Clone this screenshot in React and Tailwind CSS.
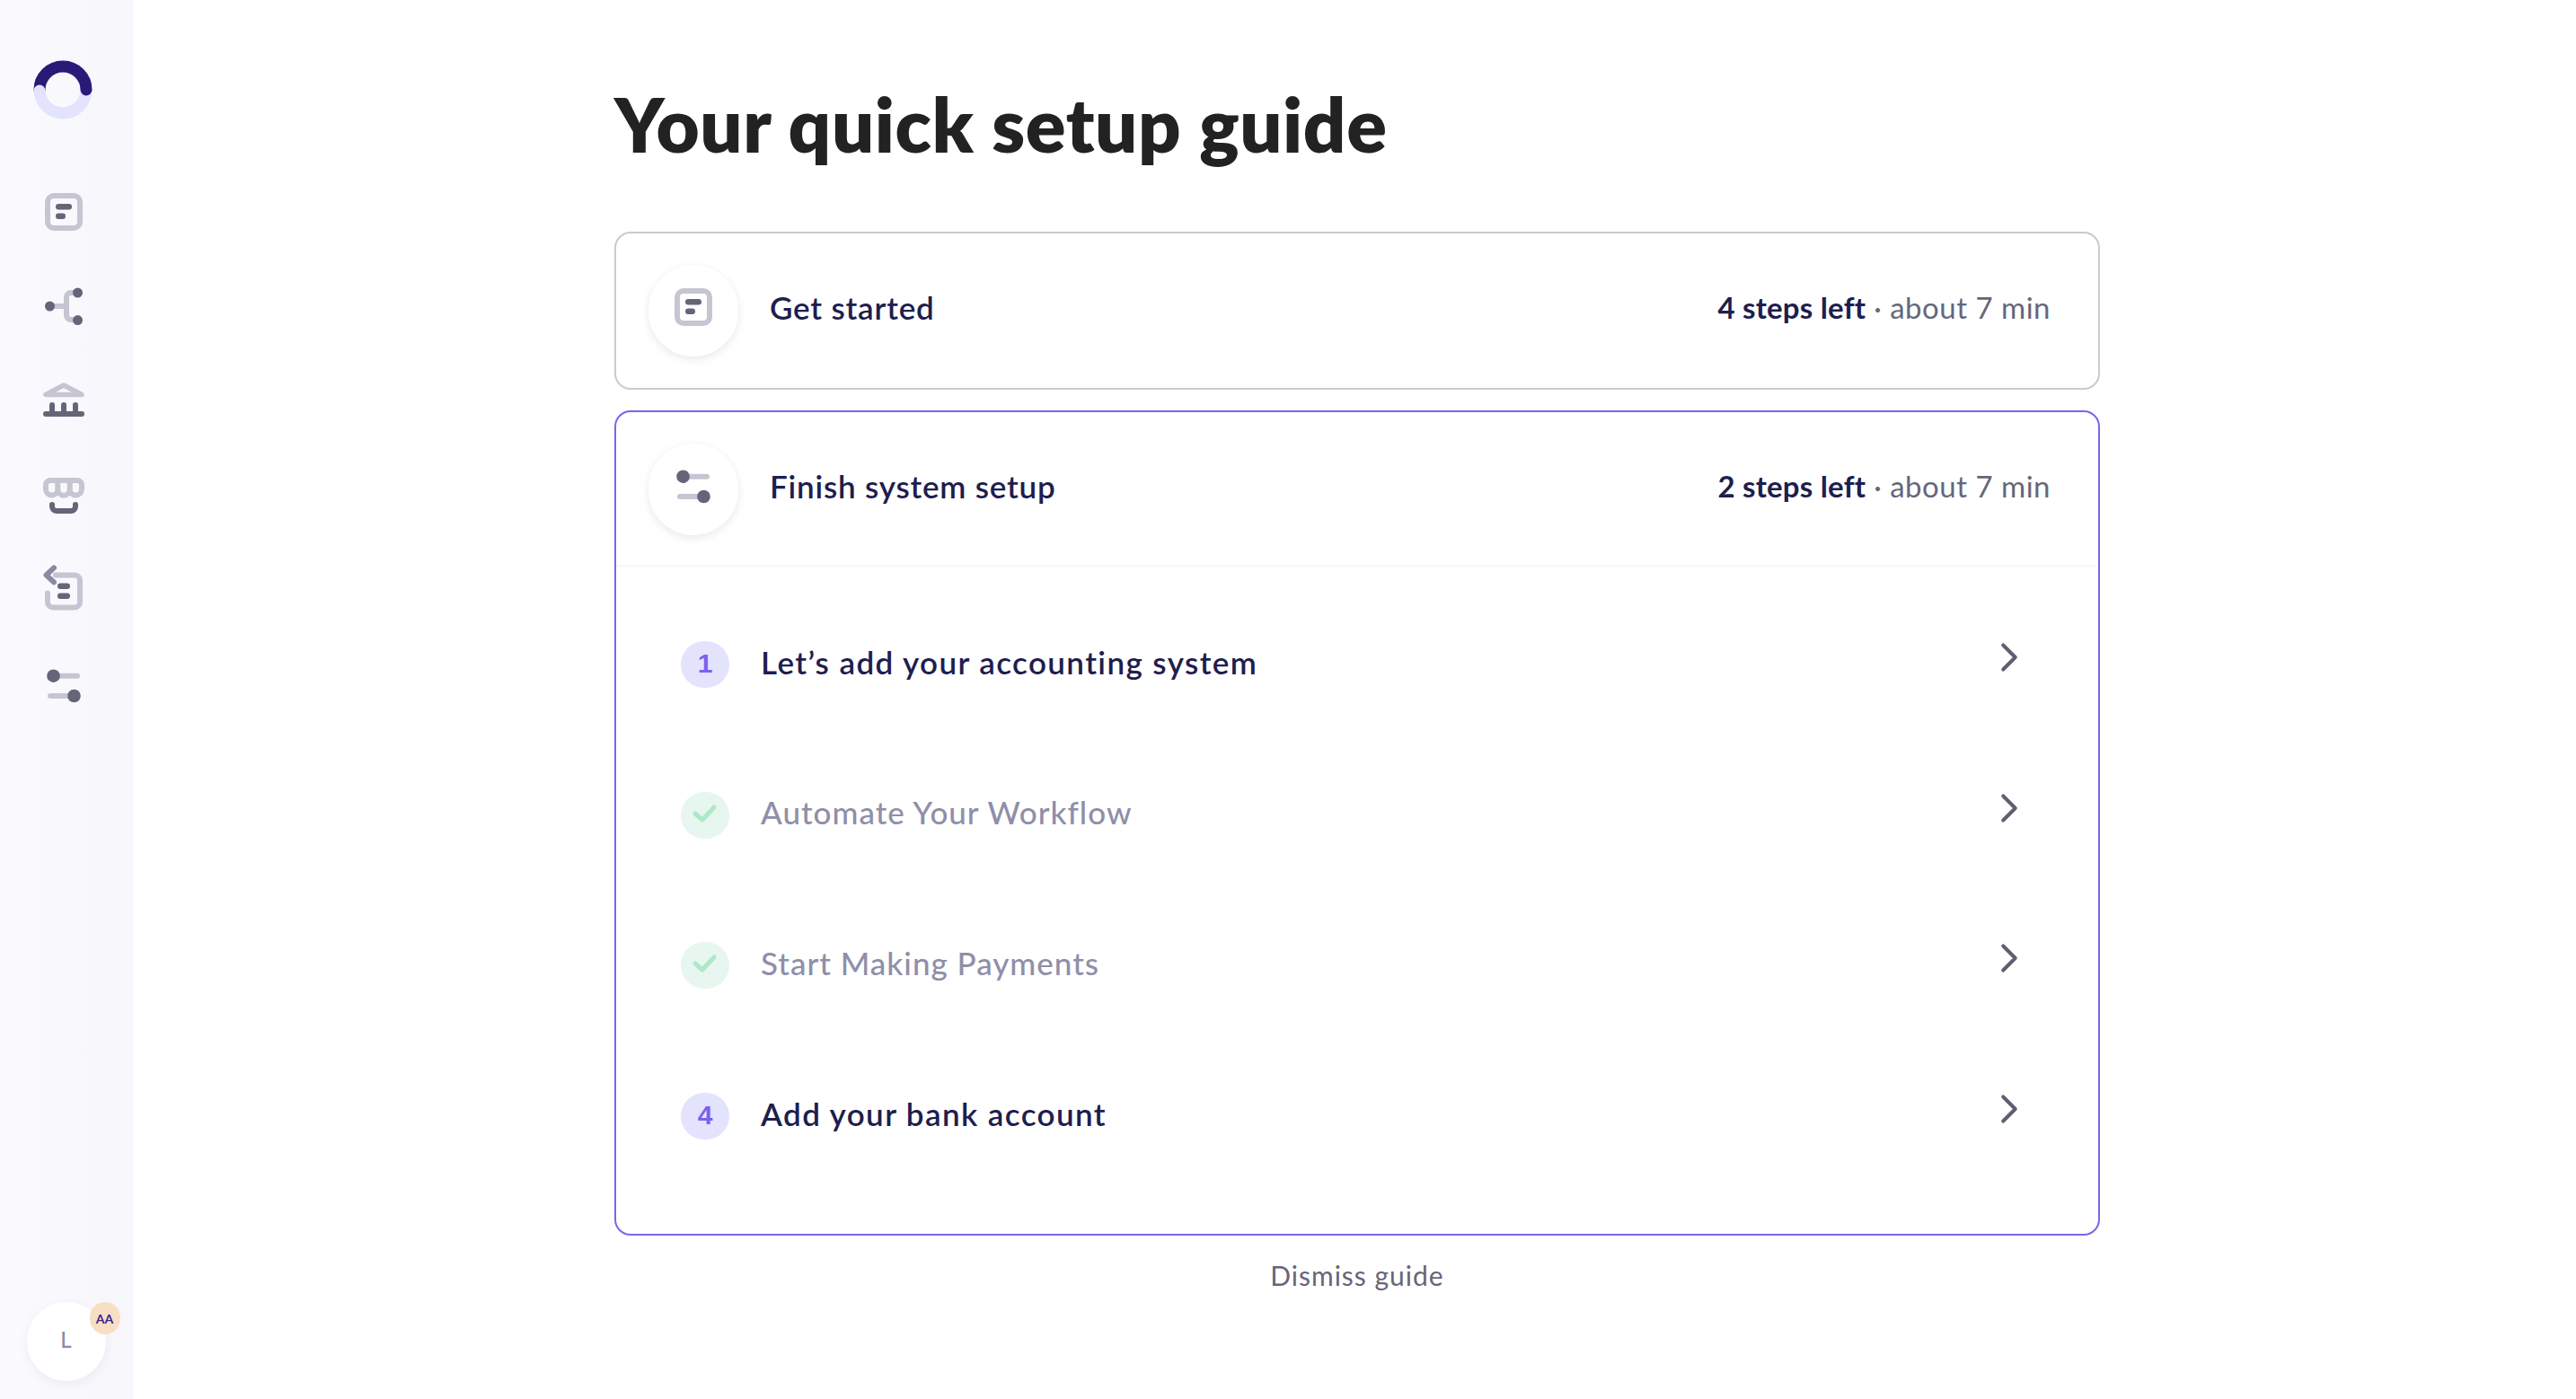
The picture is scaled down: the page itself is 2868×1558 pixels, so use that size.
import { ChevronRight } from "lucide-react";

const LIGHT = "#c6c6d2";
const DARK = "#65657a";

function LogoMark() {
  return (
    <svg width="66" height="66" viewBox="0 0 66 66" fill="none">
      <circle cx="33" cy="33" r="26" stroke="#e3e3fd" strokeWidth="13" />
      <path d="M7 33a26 26 0 0 1 52 0" stroke="#2a1a78" strokeWidth="13" strokeLinecap="round" />
      <circle cx="7" cy="34" r="6.5" fill="#e3e3fd" />
    </svg>
  );
}

function GuideIcon() {
  return (
    <svg width="60" height="60" viewBox="0 0 60 60" fill="none">
      <rect x="13" y="12" width="36" height="36" rx="7" stroke={LIGHT} strokeWidth="6" />
      <rect x="22" y="21" width="18" height="6.5" rx="3.25" fill={DARK} />
      <rect x="22" y="31.5" width="11" height="6.5" rx="3.25" fill={DARK} />
    </svg>
  );
}

function FlowIcon() {
  return (
    <svg width="60" height="60" viewBox="0 0 60 60" fill="none">
      <path d="M16 30h18M46 15h-7a5 5 0 0 0-5 5v20a5 5 0 0 0 5 5h7" stroke={LIGHT} strokeWidth="6" />
      <circle cx="15.5" cy="30" r="5.5" fill={DARK} />
      <circle cx="46.5" cy="15" r="5.5" fill={DARK} />
      <circle cx="46.5" cy="45.6" r="5.5" fill={DARK} />
    </svg>
  );
}

function BankIcon() {
  return (
    <svg width="60" height="60" viewBox="0 0 60 60" fill="none">
      <path d="M31 13 11 23.5h40z" stroke={LIGHT} strokeWidth="5.5" strokeLinejoin="round" />
      <path d="M18 35v9M31 35v9M44 35v9" stroke={DARK} strokeWidth="6" strokeLinecap="round" />
      <rect x="8" y="42" width="46" height="6" rx="3" fill={DARK} />
    </svg>
  );
}

function StoreIcon() {
  return (
    <svg width="60" height="60" viewBox="0 0 60 60" fill="none">
      <path
        d="M16 13h30a5 5 0 0 1 5 5v5a6.67 6.67 0 0 1-13.33 0 6.67 6.67 0 0 1-13.34 0 6.67 6.67 0 0 1-13.33 0v-5a5 5 0 0 1 5-5z"
        stroke={LIGHT}
        strokeWidth="6"
        strokeLinejoin="round"
      />
      <path d="M24.3 13v10M37.7 13v10" stroke={LIGHT} strokeWidth="6" />
      <path d="M18 40v2a5 5 0 0 0 5 5h16a5 5 0 0 0 5-5v-2" stroke={DARK} strokeWidth="6" strokeLinecap="round" />
    </svg>
  );
}

function ReturnIcon() {
  return (
    <svg width="60" height="60" viewBox="0 0 60 60" fill="none">
      <path d="M22 13.4h21a6 6 0 0 1 6 6v24a6 6 0 0 1-6 6H19a6 6 0 0 1-6-6v-10" stroke={LIGHT} strokeWidth="6" strokeLinecap="round" />
      <path d="M20 5.4l-8.5 8 8.5 8" stroke="#8a8aa5" strokeWidth="6" strokeLinecap="round" strokeLinejoin="round" />
      <rect x="24" y="22.4" width="14" height="6.5" rx="3.25" fill={DARK} />
      <rect x="24" y="33.4" width="14" height="6.5" rx="3.25" fill={DARK} />
    </svg>
  );
}

function SlidersIcon() {
  return (
    <svg width="60" height="60" viewBox="0 0 60 60" fill="none">
      <path d="M19.5 19.7H46M16 42h26" stroke={LIGHT} strokeWidth="6" strokeLinecap="round" />
      <circle cx="19.5" cy="19.7" r="7.3" fill={DARK} />
      <circle cx="42.5" cy="42" r="7.3" fill={DARK} />
    </svg>
  );
}

function Sidebar() {
  const icons = [GuideIcon, FlowIcon, BankIcon, StoreIcon, ReturnIcon, SlidersIcon];
  return (
    <aside className="flex h-full w-[148px] shrink-0 flex-col items-center justify-between bg-gradient-to-r from-[#fbfbff] to-[#f6f6fb] pb-[20px] pr-[8px] pt-[67px]">
      <div className="flex flex-col items-center">
        <LogoMark />
        <div className="mt-[50px] flex flex-col items-center">
          {icons.map((Icon, i) => (
            <div key={i} className="flex h-[105.4px] items-center justify-center">
              <Icon />
            </div>
          ))}
        </div>
      </div>
      <div className="relative ml-[7px] flex h-[88px] w-[88px] items-center justify-center rounded-full bg-white shadow-[0_4px_12px_rgba(60,60,110,0.07)]">
        <span className="mb-[4px] text-[24px] font-medium text-[#8a8aa5]">L</span>
        <span className="absolute right-[-16px] top-0 flex h-[36px] w-[34px] items-center justify-center rounded-full bg-[#f8dfc4] text-[14px] font-bold text-[#3a2390]">
          AA
        </span>
      </div>
    </aside>
  );
}

function SectionHeader({ Icon, title, left }) {
  return (
    <div className="flex h-[172px] items-center justify-between pl-[36px] pr-[53px]">
      <div className="flex items-center gap-[35px]">
        <div className="flex h-[102px] w-[100px] items-center justify-center rounded-full bg-white shadow-[0_3px_10px_rgba(40,40,80,0.1)]">
          <div className="mb-[8px] mr-[2px]">
            <Icon />
          </div>
        </div>
        <span className="mb-[8px] text-[35px] font-semibold tracking-[0.8px] text-[#1e1e4f]">{title}</span>
      </div>
      <div className="mb-[7px] text-[33px] tracking-[0.5px] text-[#66667a]">
        <span className="font-bold tracking-[0.2px] text-[#1e1e4f]">{left}</span> · about 7 min
      </div>
    </div>
  );
}

function StepBadge({ step }) {
  if (step.done) {
    return (
      <div className="flex h-[52px] w-[54px] items-center justify-center rounded-full bg-[#e7f6ef]">
        <svg width="30" height="24" viewBox="0 0 30 24" fill="none" className="mb-[6px]">
          <path d="m4 13 8 7L25 6" stroke="#afe8c8" strokeWidth="5" strokeLinecap="round" strokeLinejoin="round" />
        </svg>
      </div>
    );
  }
  return (
    <div className="flex h-[52px] w-[54px] items-center justify-center rounded-full bg-[#e3e3fd] pb-[2px] font-['Liberation_Sans',sans-serif] text-[30px] font-bold text-[#7a62ee]">
      {step.num}
    </div>
  );
}

function StepRow({ step }) {
  return (
    <div className="flex h-[167.7px] items-center justify-between px-[72px]">
      <div className="flex items-center gap-[35px]">
        <StepBadge step={step} />
        <span className={`mb-[6px] text-[35px] ${step.done ? "font-medium tracking-[1px] text-[#8f8fa9]" : "font-semibold tracking-[1.4px] text-[#1e1e4f]"}`}>
          {step.label}
        </span>
      </div>
      <ChevronRight className="mb-[16px] h-[54px] w-[54px] text-[#5f5f72]" strokeWidth={1.8} />
    </div>
  );
}

const steps = [
  { num: 1, label: "Let’s add your accounting system" },
  { done: true, label: "Automate Your Workflow" },
  { done: true, label: "Start Making Payments" },
  { num: 4, label: "Add your bank account" },
];

export default function App() {
  return (
    <div className="flex h-screen w-full overflow-hidden bg-white font-['Lato',sans-serif]">
      <Sidebar />
      <main className="pl-[536px]">
        <div className="w-[1654px]">
          <h1 className="pt-[88px] text-[83px] font-extrabold leading-[100px] tracking-[0.6px] text-[#222222]">Your quick setup guide</h1>
          <section className="mt-[70px] rounded-[18px] border-2 border-[#cbcbcb]">
            <SectionHeader Icon={GuideIcon} title="Get started" left="4 steps left" />
          </section>
          <section className="mt-[23px] rounded-[18px] border-2 border-[#7a66e8] pb-[47px]">
            <SectionHeader Icon={SlidersIcon} title="Finish system setup" left="2 steps left" />
            <div className="-mt-[2px] border-t-2 border-[#f6f6fb] pt-[25px]">
              {steps.map((step) => (
                <StepRow key={step.label} step={step} />
              ))}
            </div>
          </section>
          <p className="mt-[22px] text-center text-[30px] tracking-[1px] text-[#66667a]">Dismiss guide</p>
        </div>
      </main>
    </div>
  );
}
